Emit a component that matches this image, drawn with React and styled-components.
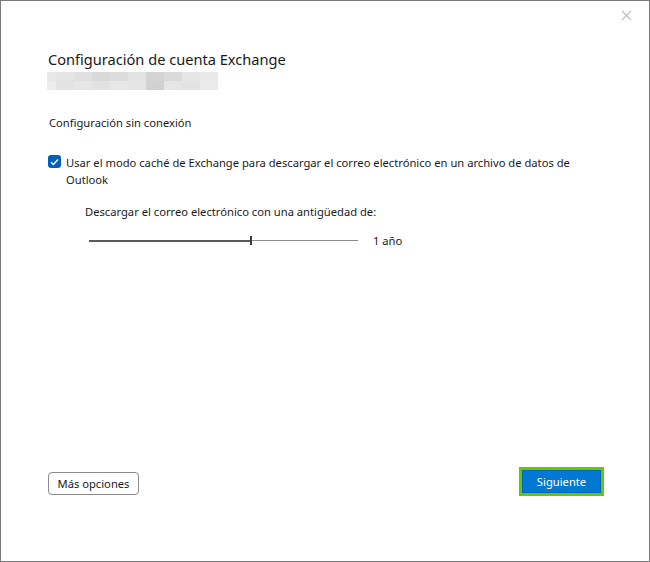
import React from "react";
import styled, { createGlobalStyle } from "styled-components";

const Global = createGlobalStyle`
  html, body {
    margin: 0;
    padding: 0;
    background: #ffffff;
  }
  body {
    font-family: "Noto Sans", "Open Sans", sans-serif;
    color: #1a1a1a;
  }
`;

const Window = styled.div`
  box-sizing: border-box;
  width: 650px;
  height: 562px;
  border: 1px solid #7a7a7a;
  background: #ffffff;
  display: flex;
  flex-direction: column;
`;

const TopBar = styled.div`
  height: 29px;
  display: flex;
  justify-content: flex-end;
  align-items: center;
  padding-right: 17px;
`;

const Close = styled.button`
  border: none;
  background: transparent;
  padding: 0;
  width: 12px;
  height: 12px;
  display: flex;
  align-items: center;
  justify-content: center;
`;

const Content = styled.div`
  padding: 0 48px 0 47px;
  display: flex;
  flex-direction: column;
`;

const Title = styled.h1`
  margin: 18px 0 0 0;
  font-size: 14.6px;
  font-weight: 400;
  line-height: 22px;
  color: #1a1a1a;
`;

const Blur = styled.div`
  margin-top: 2px;
  margin-left: -1px;
  display: grid;
  grid-template-columns: 9px repeat(9, 18px);
  grid-template-rows: 9px 9px;
  width: 171px;
`;

const Cell = styled.div`
  background: ${(p) => p.$c};
`;

const Section = styled.div`
  margin-top: 25px;
  padding-left: 1px;
  font-size: 11.2px;
  line-height: 16px;
`;

const CheckRow = styled.label`
  margin-top: 23px;
  display: flex;
  align-items: flex-start;
  gap: 5px;
  font-size: 11.2px;
  line-height: 17px;
`;

const Box = styled.span`
  flex: none;
  width: 13px;
  height: 13px;
  margin-top: 1px;
  border-radius: 3px;
  background: #005fb8;
  display: flex;
  align-items: center;
  justify-content: center;
`;

const Indent = styled.div`
  padding-left: 37px;
  margin-top: 15px;
  font-size: 11.2px;
  line-height: 17px;
`;

const SliderRow = styled.div`
  margin-top: 12px;
  padding-left: 4px;
  display: flex;
  align-items: center;
  gap: 15px;
  font-size: 11.2px;
`;

const Track = styled.div`
  width: 269px;
  height: 10px;
  display: flex;
  align-items: center;
`;

const Filled = styled.div`
  width: 161px;
  height: 2px;
  background: #5a5a5a;
`;

const Thumb = styled.div`
  width: 2px;
  height: 9px;
  background: #3c3c3c;
`;

const Rest = styled.div`
  flex: 1;
  height: 1px;
  background: #8c8c8c;
`;

const Footer = styled.div`
  margin-top: auto;
  padding: 0 45px 65px 47px;
  display: flex;
  justify-content: space-between;
  align-items: center;
`;

const Button = styled.button`
  font-family: "Noto Sans", "Open Sans", sans-serif;
  font-size: 11.2px;
  height: 23px;
  padding: 0 9px;
  border-radius: 4px;
  border: 1px solid #8a8a8a;
  background: #ffffff;
  color: #1a1a1a;
`;

const Secondary = styled(Button)`
  margin-top: 3px;
  width: 91px;
  padding: 0;
`;

const Focus = styled.div`
  border: 3px solid #66c800;
  display: flex;
`;

const Primary = styled(Button)`
  width: 79px;
  border-radius: 0;
  border: 1px solid #0067c0;
  background: #0078d4;
  color: #ffffff;
`;

const row1 = ["#e8e8e8", "#e5e5e5", "#e0e0e0", "#d9d9d9", "#dcdcdc", "#e3e3e3", "#d4d4d4", "#dadada", "#e6e6e6", "#e9e9e9"];
const row2 = ["#ededed", "#e3e3e3", "#e6e6e6", "#e2e2e2", "#e7e7e7", "#e5e5e5", "#d1d1d1", "#e5e5e5", "#e3e3e3", "#ebebeb"];

export default function App() {
  return (
    <>
      <Global />
      <Window>
        <TopBar>
          <Close aria-label="Cerrar">
            <svg width="11" height="11" viewBox="0 0 11 11">
              <path d="M1 1L10 10M10 1L1 10" stroke="#bdbdbd" strokeWidth="1.1" />
            </svg>
          </Close>
        </TopBar>
        <Content>
          <Title>Configuración de cuenta Exchange</Title>
          <Blur>
            {row1.concat(row2).map((c, i) => (
              <Cell key={i} $c={c} />
            ))}
          </Blur>
          <Section>Configuración sin conexión</Section>
          <CheckRow>
            <Box>
              <svg width="9" height="8" viewBox="0 0 9 8">
                <path d="M1 4.2L3.4 6.4L8 1.5" fill="none" stroke="#fff" strokeWidth="1.4" />
              </svg>
            </Box>
            <span>
              Usar el modo caché de Exchange para descargar el correo electrónico en un archivo de datos de Outlook
            </span>
          </CheckRow>
          <Indent>
            Descargar el correo electrónico con una antigüedad de:
            <SliderRow>
              <Track>
                <Filled />
                <Thumb />
                <Rest />
              </Track>
              <span>1 año</span>
            </SliderRow>
          </Indent>
        </Content>
        <Footer>
          <Secondary>Más opciones</Secondary>
          <Focus>
            <Primary>Siguiente</Primary>
          </Focus>
        </Footer>
      </Window>
    </>
  );
}
